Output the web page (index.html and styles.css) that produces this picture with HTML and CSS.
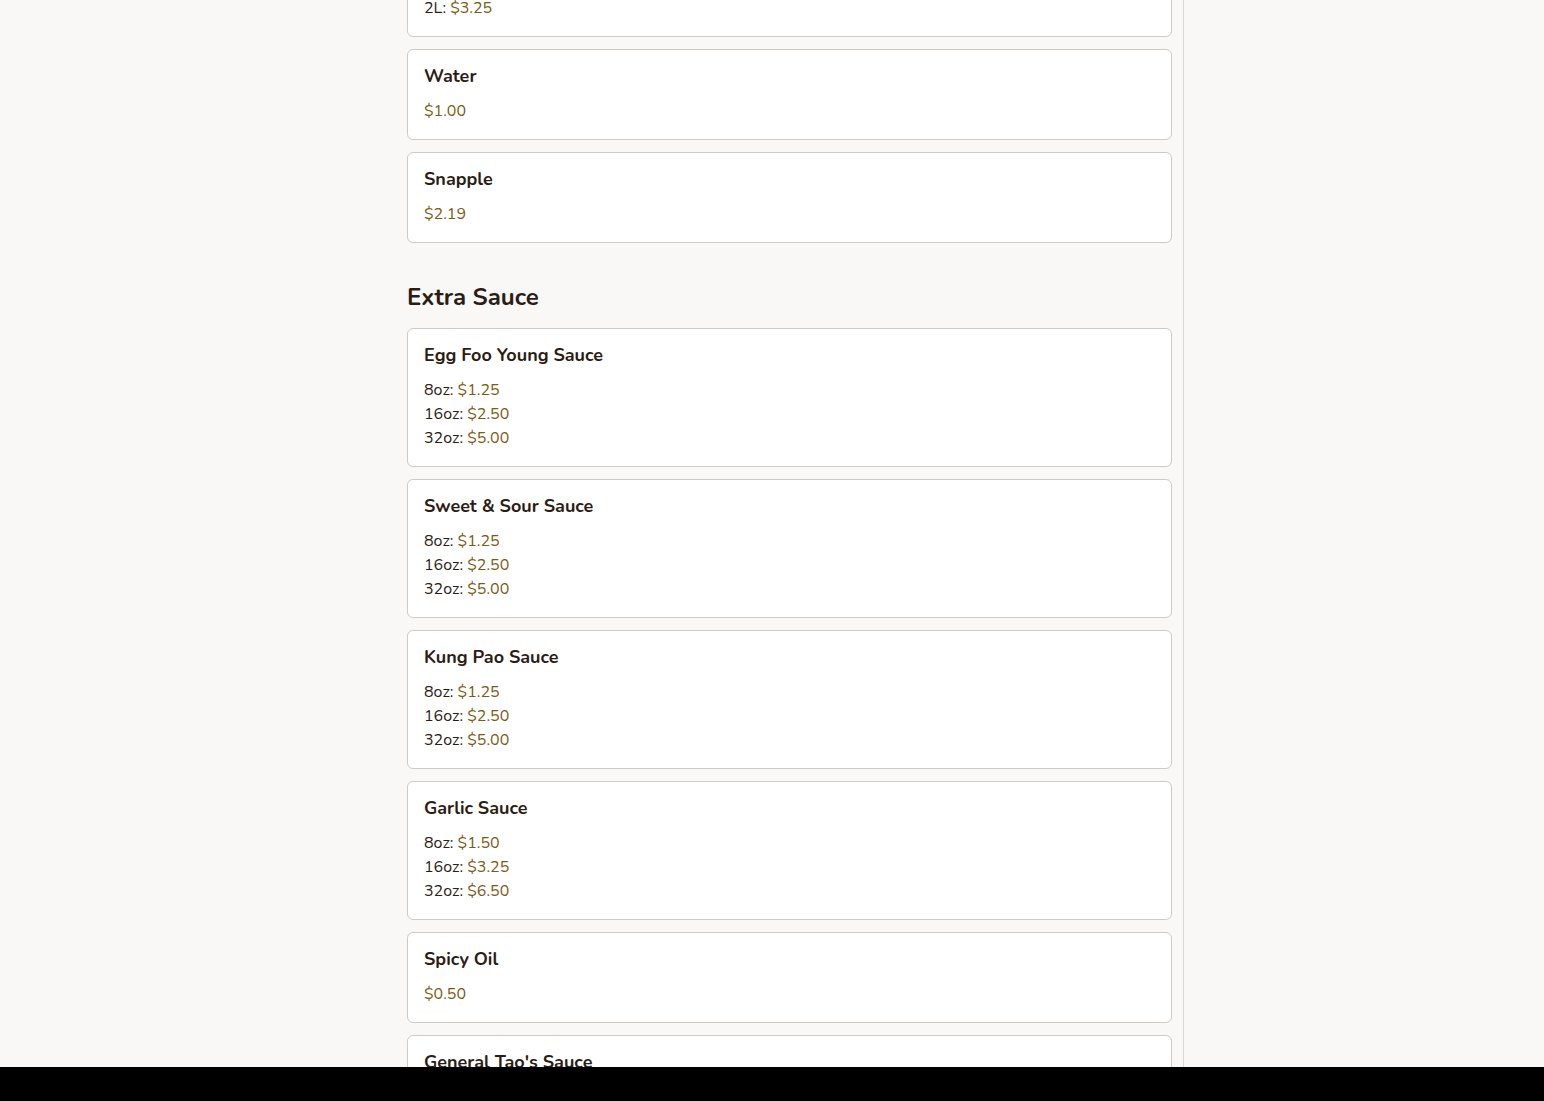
FILE: index.html
```html
<!DOCTYPE html>
<html lang="en">
<head>
<meta charset="utf-8">
<title>Menu</title>
<link rel="stylesheet" href="styles.css">
</head>
<body>
<div class="layout">
  <main class="menu">
    <section class="section first">
      <div class="cards">
        <div class="card">
          <h3 class="item-name">Soda</h3>
          <div class="prices">
            <div class="price-row">Can: <span class="price">$1.25</span></div>
            <div class="price-row">2L: <span class="price">$3.25</span></div>
          </div>
        </div>
        <div class="card">
          <h3 class="item-name">Water</h3>
          <div class="prices"><div class="price-row"><span class="price">$1.00</span></div></div>
        </div>
        <div class="card">
          <h3 class="item-name">Snapple</h3>
          <div class="prices"><div class="price-row"><span class="price">$2.19</span></div></div>
        </div>
      </div>
    </section>
    <section class="section">
      <h2 class="section-title">Extra Sauce</h2>
      <div class="cards">
        <div class="card">
          <h3 class="item-name">Egg Foo Young Sauce</h3>
          <div class="prices">
            <div class="price-row">8oz: <span class="price">$1.25</span></div>
            <div class="price-row">16oz: <span class="price">$2.50</span></div>
            <div class="price-row">32oz: <span class="price">$5.00</span></div>
          </div>
        </div>
        <div class="card">
          <h3 class="item-name">Sweet &amp; Sour Sauce</h3>
          <div class="prices">
            <div class="price-row">8oz: <span class="price">$1.25</span></div>
            <div class="price-row">16oz: <span class="price">$2.50</span></div>
            <div class="price-row">32oz: <span class="price">$5.00</span></div>
          </div>
        </div>
        <div class="card">
          <h3 class="item-name">Kung Pao Sauce</h3>
          <div class="prices">
            <div class="price-row">8oz: <span class="price">$1.25</span></div>
            <div class="price-row">16oz: <span class="price">$2.50</span></div>
            <div class="price-row">32oz: <span class="price">$5.00</span></div>
          </div>
        </div>
        <div class="card">
          <h3 class="item-name">Garlic Sauce</h3>
          <div class="prices">
            <div class="price-row">8oz: <span class="price">$1.50</span></div>
            <div class="price-row">16oz: <span class="price">$3.25</span></div>
            <div class="price-row">32oz: <span class="price">$6.50</span></div>
          </div>
        </div>
        <div class="card">
          <h3 class="item-name">Spicy Oil</h3>
          <div class="prices"><div class="price-row"><span class="price">$0.50</span></div></div>
        </div>
        <div class="card">
          <h3 class="item-name">General Tao's Sauce</h3>
          <div class="prices">
            <div class="price-row">8oz: <span class="price">$1.50</span></div>
            <div class="price-row">16oz: <span class="price">$3.25</span></div>
            <div class="price-row">32oz: <span class="price">$6.50</span></div>
          </div>
        </div>
      </div>
    </section>
  </main>
  <aside class="sidebar"></aside>
</div>
<div class="bottom-bar"></div>
</body>
</html>
```

FILE: styles.css
```css
html, body {
  margin: 0;
  padding: 0;
  height: 100%;
  overflow: hidden;
}
body {
  background: #f9f8f6;
  color: #2b1d14;
  font-family: "Nunito", "Lato", "Noto Sans", sans-serif;
  font-size: 16px;
}
.layout {
  display: flex;
  align-items: flex-start;
  padding-left: 407px;
  min-height: 100%;
}
.menu {
  width: 765px;
  padding-right: 11px;
  border-right: 1px solid #dcd8d3;
  margin-top: -78px;
  padding-bottom: 200px;
  box-sizing: content-box;
}
.sidebar {
  flex: 1;
}
.section {
  margin-top: 40px;
}
.section.first {
  margin-top: 0;
}
.section-title {
  margin: 0 0 17px;
  font-size: 24px;
  line-height: 1.2;
  font-weight: 700;
  color: #2b1d14;
}
.cards {
  display: flex;
  flex-direction: column;
  gap: 12.4px;
}
.card {
  background: #ffffff;
  border: 1px solid #cfcac4;
  border-radius: 6px;
  padding: 16px;
}
.item-name {
  margin: 0 0 11px;
  font-size: 18px;
  line-height: 1.2;
  font-weight: 700;
  color: #2b1d14;
}
.price-row {
  line-height: 24px;
  color: #2b1d14;
}
.price {
  color: #7d5a14;
}
.bottom-bar {
  position: fixed;
  left: 0;
  right: 0;
  bottom: 0;
  height: 34px;
  background: #000;
}
```
